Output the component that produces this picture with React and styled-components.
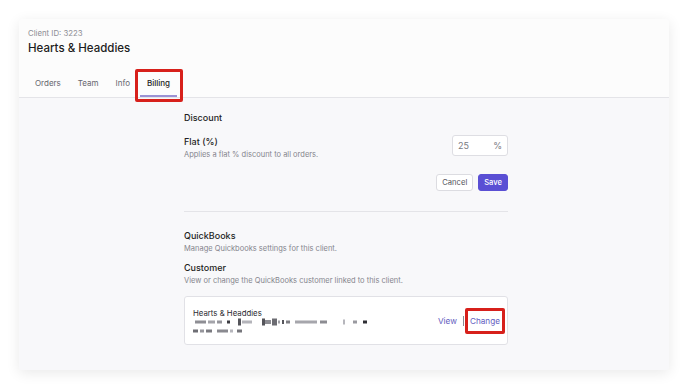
import React from 'react';
import styled, { createGlobalStyle, css } from 'styled-components';

const GlobalStyle = createGlobalStyle`
  html, body {
    margin: 0;
    background: #ffffff;
    font-family: Inter, "Noto Sans", sans-serif;
    color: #1f1f24;
  }
`;

const Page = styled.div`
  padding: 19px;
`;

const Card = styled.div`
  width: 650px;
  height: 351px;
  background: #f8f8fa;
  border-radius: 2px;
  box-shadow: 0 3px 14px rgba(0, 0, 0, 0.09);
  overflow: hidden;
`;

const Header = styled.header`
  background: #fcfcfc;
  border-bottom: 1px solid #e4e4e8;
  padding: 9px 9px 0;
  height: 69px;
  display: flex;
  flex-direction: column;
`;

const ClientId = styled.div`
  font-size: 7.8px;
  line-height: 10px;
  color: #8d8d94;
`;

const Title = styled.h1`
  margin: 2px 0 0;
  font-size: 11.5px;
  line-height: 16px;
  font-weight: 500;
  color: #1c1c22;
`;

const Tabs = styled.nav`
  display: flex;
  margin-top: auto;
  gap: 3px;
`;

const Tab = styled.div`
  position: relative;
  padding: 0 7px 7px;
  height: 28px;
  display: flex;
  align-items: flex-end;
  font-size: 8px;
  line-height: 10px;
  color: #66666e;
  border-bottom: 2px solid transparent;
  box-sizing: border-box;
  ${p => p.$active && css`
    color: #1f1f24;
    font-weight: 500;
    border-bottom-color: #9b92d4;
  `}
`;

const Mark = styled.span`
  position: absolute;
  left: ${p => p.$l}px;
  right: ${p => p.$r}px;
  top: ${p => p.$t}px;
  bottom: ${p => p.$b}px;
  border: 3px solid #d7201b;
  border-radius: 2px;
  pointer-events: none;
`;

const Body = styled.main`
  padding: 14px 0 0 165px;
  width: 324px;
`;

const SectionTitle = styled.h2`
  margin: 0;
  font-size: 9px;
  line-height: 12px;
  font-weight: 500;
  color: #1f1f24;
`;

const Hint = styled.p`
  margin: 2px 0 0;
  font-size: 7.5px;
  line-height: 10px;
  color: #85858d;
`;

const FieldRow = styled.div`
  display: flex;
  align-items: center;
  justify-content: space-between;
  margin-top: 12px;
`;

const InputBox = styled.div`
  width: 56px;
  height: 21px;
  box-sizing: border-box;
  border: 1px solid #dedee3;
  border-radius: 3px;
  background: #ffffff;
  display: flex;
  align-items: center;
  justify-content: space-between;
  padding: 0 5px;
  font-size: 9px;
  color: #7a7a82;
  margin-top: -5px;
`;

const Actions = styled.div`
  display: flex;
  justify-content: flex-end;
  gap: 5px;
  margin-top: 14px;
`;

const Button = styled.button`
  height: 17px;
  padding: 0 5px;
  border-radius: 3px;
  font-family: inherit;
  font-size: 7.6px;
  ${p => p.$primary ? css`
    background: #5a4fd4;
    border: 1px solid #5a4fd4;
    color: #ffffff;
    font-weight: 500;
  ` : css`
    background: #ffffff;
    border: 1px solid #dcdce1;
    color: #55555c;
  `}
`;

const Divider = styled.hr`
  border: 0;
  border-top: 1px solid #e4e4e8;
  margin: 20px 0 0;
`;

const Group = styled.section`
  margin-top: ${p => p.$gap}px;
`;

const CustomerBox = styled.div`
  margin-top: 10px;
  height: 49px;
  box-sizing: border-box;
  border: 1px solid #e1e1e6;
  border-radius: 3px;
  background: #ffffff;
  display: flex;
  align-items: center;
  justify-content: space-between;
  padding: 0 7px 0 8px;
`;

const CustomerName = styled.div`
  font-size: 7.8px;
  line-height: 10px;
  color: #2a2a30;
`;

const Redacted = styled.div`
  position: relative;
  height: 5px;
  width: 180px;
  margin-top: ${p => p.$top}px;
  filter: blur(0.4px);
`;

const Blot = styled.span`
  position: absolute;
  top: 50%;
  height: ${p => p.$h}px;
  transform: translateY(-50%);
  background: ${p => p.$c};
`;

const Links = styled.div`
  display: flex;
  align-items: center;
  gap: 6px;
  font-size: 8.2px;
  color: #625cc0;
  margin-top: 1px;
`;

const Sep = styled.span`
  width: 1px;
  height: 10px;
  background: #8a8a92;
`;

const LinkText = styled.span`
  position: relative;
`;

// [x, width, colour, height] from the left edge of the redacted line
const line1 = [
  [2, 11, '#8e8e94', 3], [15, 7, '#a4a4aa', 3], [24, 5, '#96969c', 3], [34, 3, '#3c3c42', 3],
  [45, 3, '#55555b', 7], [49, 10, '#b4b4ba', 3], [69, 3, '#55555b', 7], [72, 6, '#8c8c92', 4],
  [79, 5, '#6c6c72', 7], [85, 2, '#a0a0a6', 3], [89, 2, '#55555b', 4], [93, 4, '#7e7e84', 3],
  [102, 22, '#a6a6ac', 3], [127, 7, '#8c8c92', 3], [150, 2, '#b6b6bc', 5], [160, 4, '#9a9aa0', 3],
  [170, 4, '#2e2e34', 3],
];
const line2 = [
  [0, 5, '#6e6e74', 3], [7, 4, '#96969c', 3], [13, 6, '#7a7a80', 3], [24, 11, '#8a8a90', 3],
  [37, 3, '#b6b6bc', 3], [44, 5, '#76767c', 3],
];

function RedactedLine({ parts, top }) {
  return (
    <Redacted $top={top}>
      {parts.map(([x, w, c, h], i) => (
        <Blot key={i} style={{ left: x, width: w }} $c={c} $h={h} />
      ))}
    </Redacted>
  );
}

export default function App() {
  return (
    <Page>
      <GlobalStyle />
      <Card>
        <Header>
          <ClientId>Client ID: 3223</ClientId>
          <Title>Hearts &amp; Headdies</Title>
          <Tabs>
            <Tab>Orders</Tab>
            <Tab>Team</Tab>
            <Tab>Info</Tab>
            <Tab $active>
              Billing
              <Mark $l={-5} $r={-6} $t={0} $b={-7} />
            </Tab>
          </Tabs>
        </Header>
        <Body>
          <SectionTitle>Discount</SectionTitle>
          <FieldRow>
            <div>
              <SectionTitle>Flat (%)</SectionTitle>
              <Hint>Applies a flat % discount to all orders.</Hint>
            </div>
            <InputBox>
              <span>25</span>
              <span>%</span>
            </InputBox>
          </FieldRow>
          <Actions>
            <Button>Cancel</Button>
            <Button $primary>Save</Button>
          </Actions>
          <Divider />
          <Group $gap={18}>
            <SectionTitle>QuickBooks</SectionTitle>
            <Hint>Manage Quickbooks settings for this client.</Hint>
          </Group>
          <Group $gap={8}>
            <SectionTitle>Customer</SectionTitle>
            <Hint>View or change the QuickBooks customer linked to this client.</Hint>
          </Group>
          <CustomerBox>
            <div>
              <CustomerName>Hearts &amp; Headdies</CustomerName>
              <RedactedLine parts={line1} top={2} />
              <RedactedLine parts={line2} top={4} />
            </div>
            <Links>
              <span>View</span>
              <Sep />
              <LinkText>
                Change
                <Mark $l={-5} $r={-5} $t={-8} $b={-8} />
              </LinkText>
            </Links>
          </CustomerBox>
        </Body>
      </Card>
    </Page>
  );
}
